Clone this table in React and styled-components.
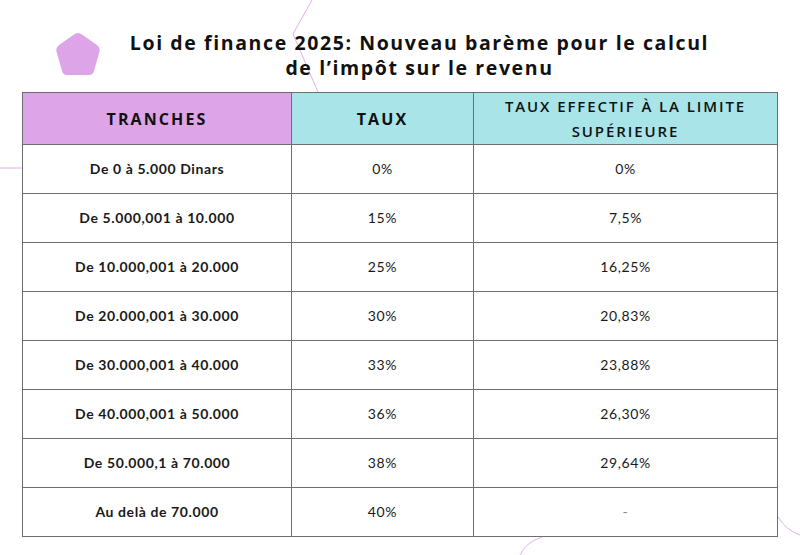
import React from 'react';
import styled, { createGlobalStyle } from 'styled-components';

const GlobalStyle = createGlobalStyle`
	html, body {
		margin: 0;
		padding: 0;
		background: #ffffff;
	}
	body {
		font-family: 'Lato', 'Liberation Sans', sans-serif;
		color: #111;
	}
`;

const rows = [
	{ tranche: 'De 0 à 5.000 Dinars', taux: '0%', effectif: '0%' },
	{ tranche: 'De 5.000,001 à 10.000', taux: '15%', effectif: '7,5%' },
	{ tranche: 'De 10.000,001 à 20.000', taux: '25%', effectif: '16,25%' },
	{ tranche: 'De 20.000,001 à 30.000', taux: '30%', effectif: '20,83%' },
	{ tranche: 'De 30.000,001 à 40.000', taux: '33%', effectif: '23,88%' },
	{ tranche: 'De 40.000,001 à 50.000', taux: '36%', effectif: '26,30%' },
	{ tranche: 'De 50.000,1 à 70.000', taux: '38%', effectif: '29,64%' },
	{ tranche: 'Au delà de 70.000', taux: '40%', effectif: '-' },
];

const Decor = () => (
	<DecorSvg width="800" height="555" viewBox="0 0 800 555">
		<polyline points="312,0 293,34 318,92" />
		<line x1="0" y1="168" x2="22" y2="168" />
		<path d="M520 555 Q526 542 542 537" />
		<path d="M778 517 Q786 530 800 535" />
	</DecorSvg>
);

const Pentagon = () => (
	<PentaSvg width="46" height="44" viewBox="0 0 46 44">
		<path d="M19 2.5 Q23 -0.5 27 2.5 L42 13 Q45.5 15.5 44.5 19.5 L39 39 Q38 43 34 43 L12 43 Q8 43 7 39 L1.5 19.5 Q0.5 15.5 4 13 Z" />
	</PentaSvg>
);

const App = () => {
	return (
		<Page>
			<GlobalStyle />
			<Decor />
			<Header>
				<Pentagon />
				<Title>
					Loi de finance 2025: Nouveau barème pour le calcul
					<br />
					de l’impôt sur le revenu
				</Title>
			</Header>
			<Table>
				<colgroup>
					<col style={{ width: '269px' }} />
					<col style={{ width: '182px' }} />
					<col style={{ width: '304px' }} />
				</colgroup>
				<thead>
					<tr>
						<HeadCell color="#dda5e8">TRANCHES</HeadCell>
						<HeadCell color="#a8e4e8">TAUX</HeadCell>
						<HeadCell color="#a8e4e8" small>
							TAUX EFFECTIF À LA LIMITE
							<br />
							SUPÉRIEURE
						</HeadCell>
					</tr>
				</thead>
				<tbody>
					{rows.map((r) => (
						<tr key={r.tranche}>
							<Cell bold>{r.tranche}</Cell>
							<Cell>{r.taux}</Cell>
							<Cell dim={r.effectif === '-'}>{r.effectif}</Cell>
						</tr>
					))}
				</tbody>
			</Table>
		</Page>
	);
};
export default App;

const Page = styled.div`
	position: relative;
	width: 800px;
	height: 555px;
	overflow: hidden;
	background: #fff;
	padding-top: 31px;
	box-sizing: border-box;
`;

const DecorSvg = styled.svg`
	position: absolute;
	left: 0;
	top: 0;
	pointer-events: none;
	fill: none;
	stroke: #dfb0ea;
	stroke-width: 1;
`;

const Header = styled.div`
	position: relative;
	display: flex;
	align-items: flex-start;
	padding-left: 55px;
	padding-right: 62px;
	height: 61px;
`;

const PentaSvg = styled.svg`
	flex-shrink: 0;
	margin-top: 1px;
	fill: #dda5e8;
`;

const Title = styled.h1`
	flex: 1;
	margin: 0;
	margin-top: -1px;
	text-align: center;
	font-family: 'Open Sans', 'Liberation Sans', sans-serif;
	font-weight: 700;
	font-size: 19.5px;
	line-height: 25px;
	letter-spacing: 1.6px;
	color: #111;
	white-space: nowrap;
`;

const Table = styled.table`
	position: relative;
	margin-left: 22px;
	width: 755px;
	border-collapse: collapse;
	table-layout: fixed;
	border: 1.5px solid #7a7a7a;
`;

const HeadCell = styled.th`
	height: 52px;
	padding: 0 4px;
	box-sizing: border-box;
	background: ${(p) => p.color};
	border: 1px solid #6e6e6e;
	text-align: center;
	vertical-align: middle;
	font-family: 'Open Sans', 'Liberation Sans', sans-serif;
	font-weight: ${(p) => (p.small ? 600 : 700)};
	font-size: ${(p) => (p.small ? '15px' : '16px')};
	line-height: ${(p) => (p.small ? '25px' : '20px')};
	letter-spacing: ${(p) => (p.small ? '1.9px' : '2.1px')};
	white-space: nowrap;
	color: #111;
`;

const Cell = styled.td`
	height: 49px;
	padding: 0 8px;
	box-sizing: border-box;
	border: 1px solid #6e6e6e;
	text-align: center;
	vertical-align: middle;
	padding-bottom: 2px;
	font-family: 'Lato', 'Liberation Sans', sans-serif;
	font-weight: ${(p) => (p.bold ? 700 : 400)};
	font-size: 14px;
	letter-spacing: 0.6px;
	color: ${(p) => (p.dim ? '#888' : '#1a1a1a')};
`;
